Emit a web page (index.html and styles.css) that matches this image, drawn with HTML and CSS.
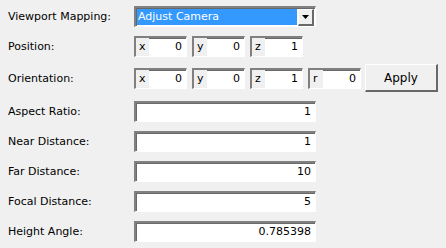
FILE: index.html
```html
<!DOCTYPE html>
<html lang="en">
<head>
<meta charset="UTF-8">
<title>Camera</title>
<link rel="stylesheet" href="styles.css">
</head>
<body>
<div class="panel">
  <div class="row r-select">
    <span class="lbl">Viewport Mapping:</span>
    <div class="combo">
      <span class="combo-sel">Adjust Camera</span>
      <span class="combo-btn"><svg width="7" height="4" viewBox="0 0 7 4"><path d="M0 0h7L3.5 4z" fill="#000"/></svg></span>
    </div>
  </div>
  <div class="row r-pos">
    <span class="lbl">Position:</span>
    <div class="vec"><span class="tag">x</span><span class="val">0</span></div>
    <div class="vec"><span class="tag">y</span><span class="val">0</span></div>
    <div class="vec"><span class="tag">z</span><span class="val">1</span></div>
  </div>
  <div class="row r-orient">
    <span class="lbl">Orientation:</span>
    <div class="vec"><span class="tag">x</span><span class="val">0</span></div>
    <div class="vec"><span class="tag">y</span><span class="val">0</span></div>
    <div class="vec"><span class="tag">z</span><span class="val">1</span></div>
    <div class="vec"><span class="tag">r</span><span class="val">0</span></div>
    <button class="btn">Apply</button>
  </div>
  <div class="row"><span class="lbl">Aspect Ratio:</span><div class="field">1</div></div>
  <div class="row"><span class="lbl">Near Distance:</span><div class="field">1</div></div>
  <div class="row"><span class="lbl">Far Distance:</span><div class="field">10</div></div>
  <div class="row"><span class="lbl">Focal Distance:</span><div class="field">5</div></div>
  <div class="row"><span class="lbl">Height Angle:</span><div class="field">0.785398</div></div>
</div>
</body>
</html>
```

FILE: styles.css
```css
html,body{margin:0;background:#f0f0f0;}
body{font-family:"DejaVu Sans",sans-serif;font-size:11px;color:#000;}
.panel{padding:6px 0 0 8px;display:flex;flex-direction:column;}
.row{display:flex;align-items:center;height:21px;margin-bottom:9px;}
.r-select{margin-bottom:9px;}
.r-pos{margin-bottom:7px;}
.r-orient{height:28px;margin-bottom:9px;}
.lbl{width:126px;flex:none;}

/* sunken box like classic win32 edit */
.field,.vec,.combo{
  box-sizing:border-box;height:21px;background:#fff;
  border-top:2px solid #808080;border-left:2px solid #808080;
  border-right:1px solid #fff;border-bottom:1px solid #fff;
  box-shadow:inset 1px 1px 0 #696969,0 0 0 0 #a0a0a0;
}
.field{width:182px;text-align:right;padding-right:4px;line-height:18px;}

.vec{width:53px;margin-right:5px;display:flex;line-height:18px;}
.tag{width:10px;padding-left:3px;background:#f0f0f0;}
.val{flex:1;text-align:right;padding-right:4px;}

.combo{width:182px;display:flex;align-items:center;padding:1px 1px 1px 1px;}
.combo-sel{flex:1;height:16px;line-height:16px;background:#3399ff;color:#fff;padding-left:1px;margin-right:1px;}
.combo-btn{width:16px;height:17px;box-sizing:border-box;background:#f0f0f0;
  border-top:1px solid #fff;border-left:1px solid #fff;
  border-right:2px solid #696969;border-bottom:2px solid #696969;
  display:flex;align-items:center;justify-content:center;}

.btn{margin-left:-1px;width:73px;height:28px;font:inherit;font-size:12px;color:#000;background:#f0f0f0;
  border-top:1px solid #fff;border-left:1px solid #fff;
  border-right:2px solid #696969;border-bottom:2px solid #696969;padding:0;}
```
